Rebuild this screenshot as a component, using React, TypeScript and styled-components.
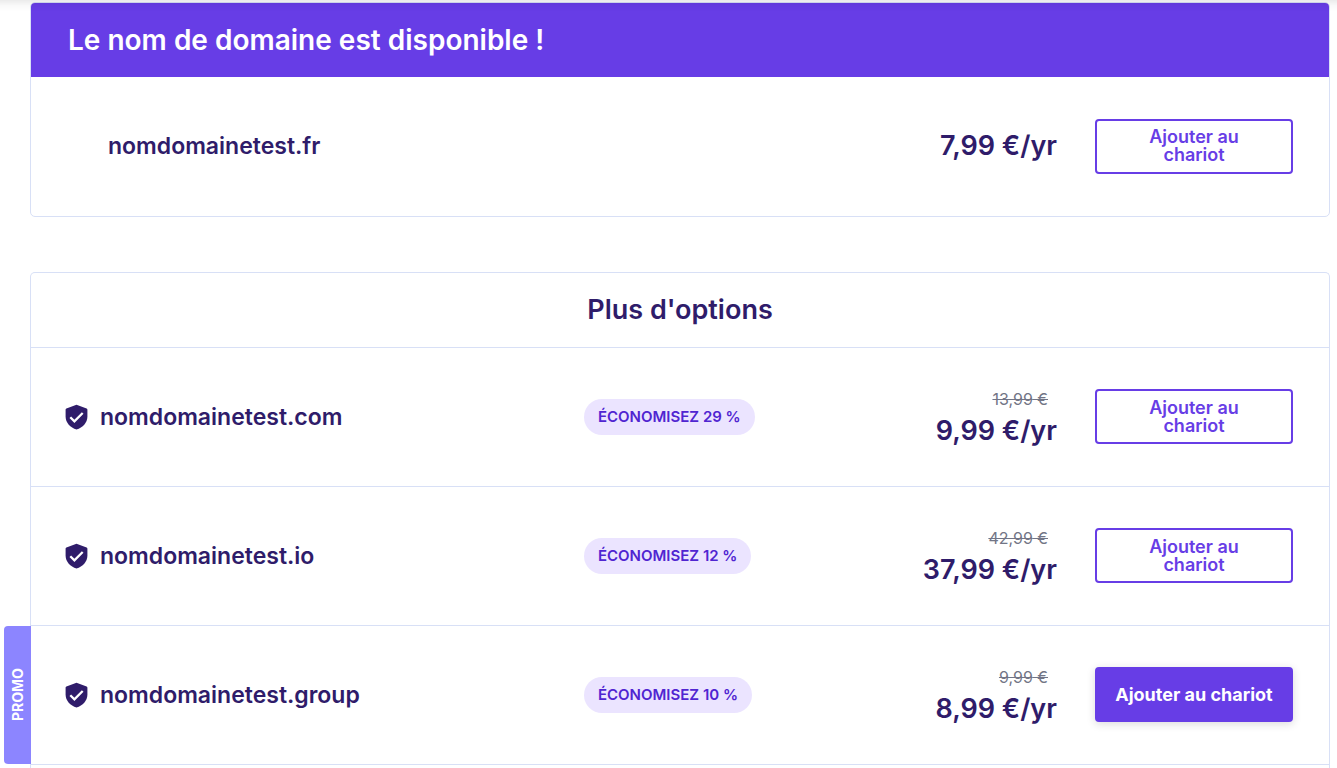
import React from 'react';
import styled, { createGlobalStyle, css } from 'styled-components';

const ink = '#2f1c6a';
const primary = '#673de6';
const line = '#d8e0f6';

const GlobalStyle = createGlobalStyle`
  *, *::before, *::after { box-sizing: border-box; }
  body {
    margin: 0;
    background: #fff;
    color: ${ink};
    font-family: Inter, "Liberation Sans", sans-serif;
  }
  h2, p { margin: 0; }
`;

const TopShade = styled.div`
  position: fixed;
  inset: 0 0 auto;
  height: 12px;
  background: linear-gradient(rgba(0, 0, 0, 0.08), rgba(0, 0, 0, 0.02) 50%, transparent);
  pointer-events: none;
`;

const Page = styled.main`
  display: flex;
  flex-direction: column;
  gap: 55px;
  min-height: 100vh;
  padding: 2px 7px 0 30px;
`;

const Card = styled.section<{ $open?: boolean }>`
  border: 1px solid ${line};
  border-radius: 5px;
  ${({ $open }) =>
    $open &&
    css`
      flex: 1;
      border-bottom: 0;
      border-radius: 5px 5px 0 0;
    `}
`;

const Banner = styled.h2`
  padding: 20px 37px;
  border-radius: 4px 4px 0 0;
  background: ${primary};
  color: #fff;
  font-size: 28px;
  font-weight: 600;
  line-height: 34px;
`;

const OptionsTitle = styled.h2`
  padding: 20px 37px;
  border-bottom: 1px solid ${line};
  font-size: 27px;
  font-weight: 600;
  line-height: 34px;
  text-align: center;
`;

const List = styled.ul`
  margin: 0;
  padding: 0;
  list-style: none;
`;

const Row = styled.li`
  position: relative;
  display: grid;
  grid-template-columns: 21fr 10fr 9fr 198px;
  column-gap: 38px;
  align-items: center;
  min-height: 139px;
  padding: 0 36px 1px 34px;
  ${List} > & {
    border-bottom: 1px solid ${line};
  }
`;

const SingleRow = styled(Row).attrs({ as: 'div' })`
  padding-left: 77px;
`;

const Name = styled.div`
  display: flex;
  align-items: center;
  gap: 12px;
  font-size: 23px;
  font-weight: 600;
  line-height: 32px;
`;

const Badge = styled.span`
  justify-self: start;
  padding: 6px 14px;
  border-radius: 18px;
  background: #ebe4ff;
  color: #5025d1;
  font-size: 15px;
  font-weight: 600;
  line-height: 24px;
  white-space: nowrap;
`;

const Prices = styled.div`
  grid-column: 3;
  text-align: right;
  white-space: nowrap;
`;

const OldPrice = styled.del`
  display: block;
  padding: 4px 9px 0 0;
  color: #727586;
  font-size: 16px;
  line-height: 24px;
`;

const Price = styled.p`
  font-size: 27px;
  font-weight: 600;
  line-height: 40px;
`;

const CartButton = styled.button<{ $solid?: boolean }>`
  height: 55px;
  padding: 0 36px;
  border: 2px solid ${primary};
  border-radius: 4px;
  background: #fff;
  color: ${primary};
  font-family: inherit;
  font-size: 18px;
  font-weight: 600;
  line-height: 18px;
  cursor: pointer;
  ${({ $solid }) =>
    $solid &&
    css`
      padding: 0;
      background: ${primary};
      color: #fff;
      font-weight: 700;
      box-shadow: 0 2px 8px rgba(29, 30, 32, 0.16);
    `}
`;

const PromoTag = styled.span`
  position: absolute;
  top: 0;
  bottom: 0;
  right: 100%;
  display: flex;
  align-items: center;
  justify-content: center;
  width: 27px;
  border-radius: 0 4px 4px 0;
  background: #8c85ff;
  color: #fff;
  font-size: 14px;
  font-weight: 700;
  writing-mode: vertical-rl;
  transform: rotate(180deg);
`;

const Shield = () => (
  <svg width="23" height="26" viewBox="0 0 23 26" aria-hidden="true">
    <path
      d="M11.5 .7 21.6 4.4Q22.4 4.8 22.4 5.7V12.4C22.4 18.6 17.7 23.6 11.5 25.4 5.3 23.6 .6 18.6 .6 12.4V5.7Q.6 4.8 1.4 4.4Z"
      fill={ink}
    />
    <path d="M5.3 13.3 9.4 17.3 17.7 9" fill="none" stroke="#fff" strokeWidth="2.3" />
  </svg>
);

type Option = { name: string; save: string; old: string; price: string; promo?: boolean };

const options: Option[] = [
  { name: 'nomdomainetest.com', save: '29', old: '13,99', price: '9,99' },
  { name: 'nomdomainetest.io', save: '12', old: '42,99', price: '37,99' },
  { name: 'nomdomainetest.group', save: '10', old: '9,99', price: '8,99', promo: true },
];

export default function App() {
  return (
    <>
      <GlobalStyle />
      <Page>
        <Card>
          <Banner>Le nom de domaine est disponible !</Banner>
          <SingleRow>
            <Name>nomdomainetest.fr</Name>
            <Prices>
              <Price>7,99 €/yr</Price>
            </Prices>
            <CartButton type="button">Ajouter au chariot</CartButton>
          </SingleRow>
        </Card>
        <Card $open>
          <OptionsTitle>Plus d'options</OptionsTitle>
          <List>
            {options.map((o) => (
              <Row key={o.name}>
                {o.promo && <PromoTag>PROMO</PromoTag>}
                <Name>
                  <Shield />
                  {o.name}
                </Name>
                <Badge>ÉCONOMISEZ {o.save} %</Badge>
                <Prices>
                  <OldPrice>{o.old} €</OldPrice>
                  <Price>{o.price} €/yr</Price>
                </Prices>
                <CartButton type="button" $solid={o.promo}>
                  Ajouter au chariot
                </CartButton>
              </Row>
            ))}
          </List>
        </Card>
      </Page>
      <TopShade />
    </>
  );
}
